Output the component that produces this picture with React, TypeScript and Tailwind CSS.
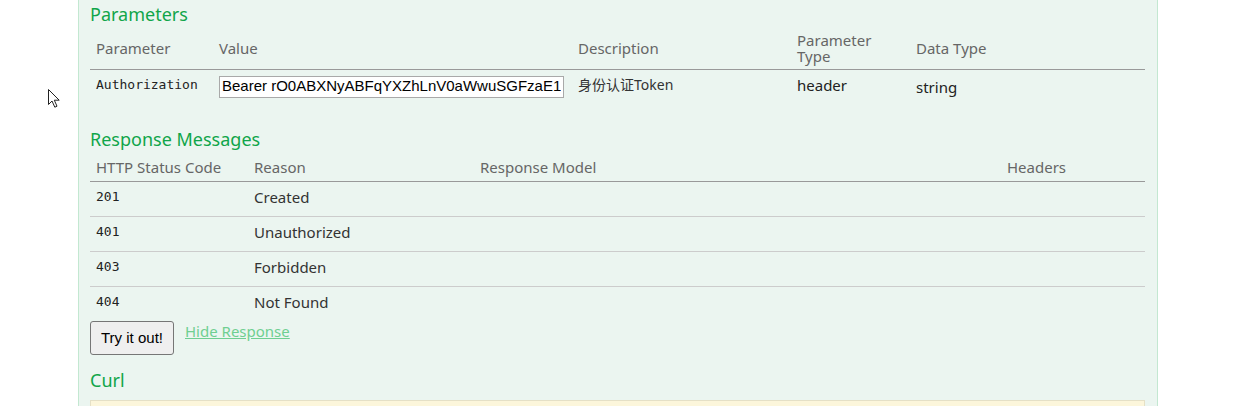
import React from 'react';

const params = [
  {
    name: 'Authorization',
    value: 'Bearer rO0ABXNyABFqYXZhLnV0aWwuSGFzaE1hcAUH2sHDFmDRAwACRgAKbG9hZEZhY3Rvcg',
    description: '身份认证Token',
    paramType: 'header',
    dataType: 'string',
  },
];

const responses = [
  { code: '201', reason: 'Created' },
  { code: '401', reason: 'Unauthorized' },
  { code: '403', reason: 'Forbidden' },
  { code: '404', reason: 'Not Found' },
];

const sans = 'font-["Noto_Sans","Open_Sans",sans-serif]';

function Cursor() {
  return (
    <svg className="absolute left-[47px] top-[88px]" width="14" height="21" viewBox="0 0 14 21">
      <path
        d="M1.5 1.5 L1.5 16.5 L5 13 L7.8 19.2 L10 18.2 L7.3 12.2 L12.2 12.2 Z"
        fill="#fff"
        stroke="#222"
        strokeWidth="1"
        strokeLinejoin="round"
      />
    </svg>
  );
}

export default function App() {
  return (
    <div className={`relative h-[406px] w-full overflow-hidden bg-white ${sans}`}>
      <Cursor />
      <div className="ml-[78px] h-full w-[1080px] border-x border-[#c3e8d1] bg-[#ebf5f0] pl-[11px] pr-[12px]">
        {/* Parameters */}
        <h4 className="h-[28px] text-[18px] leading-[28px] text-[#10a54a]">Parameters</h4>
        <table className="w-full border-collapse text-left">
          <thead>
            <tr className="h-[41px] border-b border-[#999] text-[15px] leading-[16px] text-[#666]">
              <th className="w-[123px] px-[6px] font-normal">Parameter</th>
              <th className="w-[359px] px-[6px] font-normal">Value</th>
              <th className="w-[219px] px-[6px] font-normal">Description</th>
              <th className="w-[119px] px-[6px] font-normal">
                Parameter
                <br />
                Type
              </th>
              <th className="px-[6px] font-normal">Data Type</th>
            </tr>
          </thead>
          <tbody>
            {params.map((p) => (
              <tr key={p.name} className="h-[32px] align-top text-[15px] text-[#222]">
                <td className="px-[6px] pt-[5px] font-['DejaVu_Sans_Mono',monospace] text-[13px] leading-[20px]">
                  {p.name}
                </td>
                <td className="px-[6px] pt-[6px]">
                  <input
                    readOnly
                    value={p.value}
                    className="block h-[22px] w-[345px] border border-[#a9a9a9] bg-white px-[2px] font-['Liberation_Sans',Arial,sans-serif] text-[15px] text-black outline-none"
                  />
                </td>
                <td className="px-[6px] pt-[5px] font-['Noto_Sans','Noto_Sans_CJK_SC',sans-serif] text-[14px] leading-[20px] text-[#333]">
                  {p.description}
                </td>
                <td className="px-[6px] pt-[5px] leading-[20px]">{p.paramType}</td>
                <td className="px-[6px] pt-[7px] leading-[20px]">{p.dataType}</td>
              </tr>
            ))}
          </tbody>
        </table>

        {/* Response Messages */}
        <h4 className="mt-[24px] h-[28px] text-[18px] leading-[28px] text-[#10a54a]">Response Messages</h4>
        <table className="w-full border-collapse text-left">
          <thead>
            <tr className="h-[28px] border-b border-[#999] text-[15px] leading-[20px] text-[#666]">
              <th className="w-[158px] px-[6px] font-normal">HTTP Status Code</th>
              <th className="w-[226px] px-[6px] font-normal">Reason</th>
              <th className="w-[527px] px-[6px] font-normal">Response Model</th>
              <th className="px-[6px] font-normal">Headers</th>
            </tr>
          </thead>
          <tbody>
            {responses.map((r, i) => (
              <tr
                key={r.code}
                className={`h-[35px] text-[15px] text-[#333] ${
                  i < responses.length - 1 ? 'border-b border-[#ccc]' : ''
                }`}
              >
                <td className="px-[6px] pb-[4px] font-['DejaVu_Sans_Mono',monospace] text-[13px] text-[#222]">
                  {r.code}
                </td>
                <td className="px-[6px] pb-[3px]">{r.reason}</td>
                <td className="px-[6px]"></td>
                <td className="px-[6px]"></td>
              </tr>
            ))}
          </tbody>
        </table>

        <div className="flex items-start gap-[11px]">
          <button className="h-[34px] w-[84px] rounded-[3px] border border-[#767676] bg-[#efefef] font-['Liberation_Sans',Arial,sans-serif] text-[15px] text-black">
            Try it out!
          </button>
          <a className="text-[15px] leading-[20px] text-[#6fcf91] underline" href="#">
            Hide Response
          </a>
        </div>

        {/* Curl */}
        <h4 className="mt-[11px] h-[28px] text-[18px] leading-[28px] text-[#10a54a]">Curl</h4>
        <div className="mt-[6px] h-[60px] border border-[#e5e0c6] bg-[#fcf6db]"></div>
      </div>
    </div>
  );
}
